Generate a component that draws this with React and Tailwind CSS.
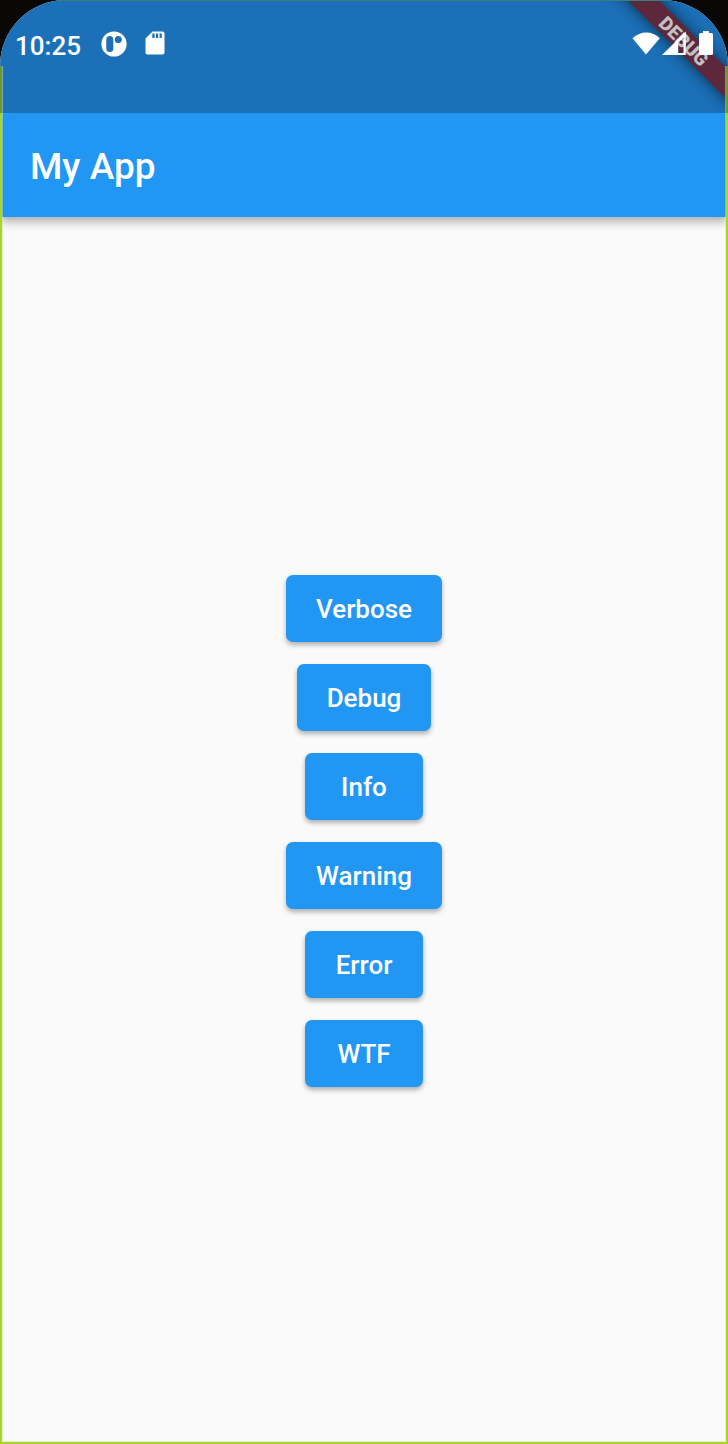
import React from "react";

const LEVELS = ["Verbose", "Debug", "Info", "Warning", "Error", "WTF"];

function NotificationIcon() {
  return (
    <svg width="26" height="26" viewBox="0 0 26 26" aria-hidden="true">
      <circle cx="13" cy="13" r="12.6" fill="#fff" />
      <rect x="5.3" y="5" width="7" height="16" rx="3.5" fill="#1b70b8" />
      <circle cx="17.3" cy="8.4" r="3.5" fill="#1b70b8" />
    </svg>
  );
}

function SdCardIcon() {
  return (
    <svg width="20" height="24" viewBox="0 0 20 24" aria-hidden="true">
      <path
        fill="#fff"
        fillRule="evenodd"
        d="M7.5.5H17.5A2 2 0 0 1 19.5 2.5V21.5A2 2 0 0 1 17.5 23.5H2.5A2 2 0 0 1 .5 21.5V7.5ZM7.3 2.6V7H9.6V2.6ZM11 2.6V7H13.2V2.6ZM14.6 2.6V7H16.8V2.6Z"
      />
    </svg>
  );
}

function SystemIcons() {
  return (
    <svg width="82" height="24" viewBox="0 0 82 24" fill="#fff" aria-hidden="true">
      <path d="M.5 7.3C8.5-.3 20.5-.3 27.8 7.3L14 23.6Z" />
      <path
        fillRule="evenodd"
        d="M30 24 53.8.5V24ZM46.2 11.8V22H51.5V6.4Z"
      />
      <path d="M71 0H77V2H79.5Q81 2 81 3.5V22.5Q81 24 79.5 24H68.5Q67 24 67 22.5V3.5Q67 2 68.5 2H71Z" />
    </svg>
  );
}

function DebugBanner() {
  return (
    <div className="pointer-events-none absolute top-0 right-0 h-28 w-40 overflow-hidden">
      <div className="absolute top-[29px] -right-[56px] flex h-[22px] w-50 rotate-45 items-center justify-center bg-[#5d283b] text-[19px] leading-none font-black text-[#c4bfc0] shadow-[0_0_16px_rgba(0,0,0,0.6)]">
        DEBUG
      </div>
    </div>
  );
}

export default function App() {
  return (
    <div className="min-h-screen bg-[#0a0806] font-[Roboto,sans-serif]">
      <div className="relative flex min-h-screen flex-col overflow-hidden rounded-t-[66px] bg-[#fafafa]">
        <div className="relative z-10 h-[113px] border-t border-[#3a7d7c] bg-[#1b70b8]">
          <DebugBanner />
          <div className="relative flex items-start pt-[30px] pr-[14px] pl-[15px] text-white">
            <time className="w-[86px] text-[26px] leading-[30px] font-medium">10:25</time>
            <NotificationIcon />
            <span className="ml-[18px]">
              <SdCardIcon />
            </span>
            <span className="ml-auto">
              <SystemIcons />
            </span>
          </div>
        </div>

        <header className="relative flex h-[104px] items-center bg-[#2196f3] px-[30px] pt-1 text-white shadow-[0_4px_10px_rgba(0,0,0,0.35)]">
          <h1 className="text-[37px] leading-[44px] font-medium">My App</h1>
        </header>

        <main className="flex flex-1 flex-col items-center justify-center gap-[22px] py-8">
          {LEVELS.map((level) => (
            <button
              key={level}
              type="button"
              className="h-[67px] min-w-[118px] rounded-[7px] bg-[#2196f3] px-[30px] pt-px text-[26px] leading-8 font-medium text-white shadow-[0_3px_5px_rgba(0,0,0,0.3)]"
            >
              {level}
            </button>
          ))}
        </main>

        <div className="pointer-events-none absolute inset-x-0 top-[66px] bottom-0 z-20 border-x-2 border-b-2 border-[#a6d629]">
          <div className="h-full border-x border-b border-[#d5ea9c]/50" />
        </div>
        <div className="pointer-events-none absolute inset-x-0 top-[66px] z-20 h-[47px] border-x-2 border-[#6a9a28]" />
      </div>
    </div>
  );
}
